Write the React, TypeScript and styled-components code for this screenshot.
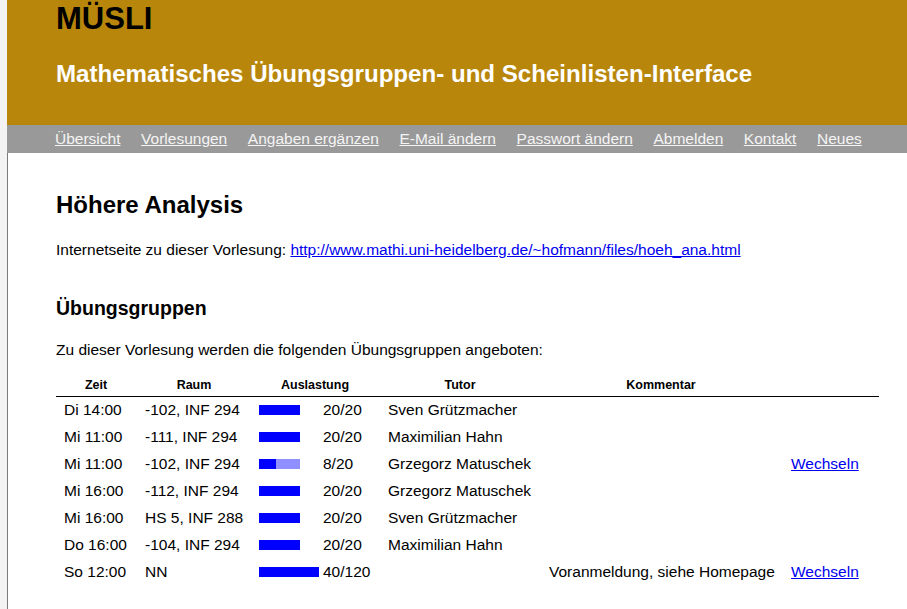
import React from "react";
import styled, { createGlobalStyle } from "styled-components";

const GlobalStyle = createGlobalStyle`
  html, body { margin: 0; padding: 0; }
  body {
    background: #f3f3f3;
    font-family: "Liberation Sans", Arial, sans-serif;
    color: #000;
  }
`;

const Page = styled.div`
  margin-left: 7px;
  min-height: 100vh;
  background: #fff;
  display: flex;
  flex-direction: column;
`;

const Header = styled.header`
  background: #b8860b;
  padding: 3px 0 39px 49px;
`;

const SiteTitle = styled.div`
  font-size: 31px;
  line-height: 32px;
  font-weight: bold;
  color: #000;
`;

const SiteSubtitle = styled.div`
  margin-top: 27px;
  font-size: 24.1px;
  line-height: 24px;
  font-weight: bold;
  color: #fff;
`;

const Nav = styled.nav`
  background: #999999;
  height: 28px;
  display: flex;
  align-items: center;
  gap: 20.6px;
  padding-left: 48px;
`;

const NavLink = styled.a`
  color: #f4f4f4;
  font-size: 15.5px;
  text-decoration: underline;
  white-space: nowrap;
`;

const Main = styled.main`
  flex: 1;
  border-left: 1px solid #7b7b7b;
  padding: 40px 27px 20px 48px;
`;

const Title = styled.h1`
  margin: 0 0 24px;
  font-size: 24px;
  line-height: 24px;
  font-weight: bold;
`;

const Para = styled.p<{ $after?: number }>`
  margin: 0 0 ${(p) => p.$after ?? 0}px;
  font-size: 15.5px;
  line-height: 18px;
`;

const Link = styled.a`
  color: #0000ee;
  text-decoration: underline;
`;

const SectionTitle = styled.h2`
  margin: 39px 0 23px;
  font-size: 19.5px;
  line-height: 20px;
  font-weight: bold;
`;

const Table = styled.table`
  width: 823px;
  border-collapse: collapse;
  table-layout: fixed;
`;

const Th = styled.th`
  font-size: 12.5px;
  line-height: 15px;
  font-weight: bold;
  text-align: center;
  padding: 3px 7px;
  border-bottom: 1px solid #000;
  white-space: nowrap;
`;

const Td = styled.td<{ $align?: "left" | "center" | "right"; $padLeft?: number }>`
  font-size: 15.5px;
  line-height: 18px;
  padding: 4px 7px 5px ${(p) => p.$padLeft ?? 7}px;
  text-align: ${(p) => p.$align ?? "left"};
  white-space: nowrap;
  overflow: visible;
`;

const Track = styled.span`
  display: inline-block;
  width: 60px;
  height: 10px;
  margin-right: 4px;
  overflow: hidden;
  vertical-align: baseline;
`;

const Bar = styled.span`
  display: flex;
  height: 10px;
  background: #8f8fff;
`;

const Fill = styled.span`
  display: block;
  height: 10px;
  background: #0000ff;
`;

type Row = {
  zeit: string;
  raum: string;
  label: string;
  fill: number;
  total: number;
  tutor: string;
  komm?: string;
  wechseln?: boolean;
};

const rows: Row[] = [
  { zeit: "Di 14:00", raum: "-102, INF 294", label: "20/20", fill: 41, total: 41, tutor: "Sven Grützmacher" },
  { zeit: "Mi 11:00", raum: "-111, INF 294", label: "20/20", fill: 41, total: 41, tutor: "Maximilian Hahn" },
  { zeit: "Mi 11:00", raum: "-102, INF 294", label: "8/20", fill: 17, total: 41, tutor: "Grzegorz Matuschek", wechseln: true },
  { zeit: "Mi 16:00", raum: "-112, INF 294", label: "20/20", fill: 41, total: 41, tutor: "Grzegorz Matuschek" },
  { zeit: "Mi 16:00", raum: "HS 5, INF 288", label: "20/20", fill: 41, total: 41, tutor: "Sven Grützmacher" },
  { zeit: "Do 16:00", raum: "-104, INF 294", label: "20/20", fill: 41, total: 41, tutor: "Maximilian Hahn" },
  { zeit: "So 12:00", raum: "NN", label: "40/120", fill: 60, total: 60, tutor: "", komm: "Voranmeldung, siehe Homepage", wechseln: true },
];

const navItems = [
  "Übersicht",
  "Vorlesungen",
  "Angaben ergänzen",
  "E-Mail ändern",
  "Passwort ändern",
  "Abmelden",
  "Kontakt",
  "Neues",
];

export default function App() {
  return (
    <>
      <GlobalStyle />
      <Page>
        <Header>
          <SiteTitle>MÜSLI</SiteTitle>
          <SiteSubtitle>Mathematisches Übungsgruppen- und Scheinlisten-Interface</SiteSubtitle>
        </Header>
        <Nav>
          {navItems.map((n) => (
            <NavLink key={n} href="#">
              {n}
            </NavLink>
          ))}
        </Nav>
        <Main>
          <Title>Höhere Analysis</Title>
          <Para>
            Internetseite zu dieser Vorlesung:{" "}
            <Link href="#">http://www.mathi.uni-heidelberg.de/~hofmann/files/hoeh_ana.html</Link>
          </Para>
          <SectionTitle>Übungsgruppen</SectionTitle>
          <Para $after={16}>Zu dieser Vorlesung werden die folgenden Übungsgruppen angeboten:</Para>
          <Table>
            <colgroup>
              <col style={{ width: 80 }} />
              <col style={{ width: 116 }} />
              <col style={{ width: 126 }} />
              <col style={{ width: 164 }} />
              <col style={{ width: 238 }} />
              <col style={{ width: 99 }} />
            </colgroup>
            <thead>
              <tr>
                <Th>Zeit</Th>
                <Th>Raum</Th>
                <Th>Auslastung</Th>
                <Th>Tutor</Th>
                <Th>Kommentar</Th>
                <Th></Th>
              </tr>
            </thead>
            <tbody>
              {rows.map((r, i) => (
                <tr key={i}>
                  <Td $padLeft={8}>{r.zeit}</Td>
                  <Td $padLeft={9}>{r.raum}</Td>
                  <Td>
                    <Track>
                      <Bar style={{ width: r.total }}>
                        <Fill style={{ width: r.fill }} />
                      </Bar>
                    </Track>
                    {r.label}
                  </Td>
                  <Td $padLeft={10}>{r.tutor}</Td>
                  <Td $align="center">{r.komm ?? ""}</Td>
                  <Td $padLeft={11}>{r.wechseln ? <Link href="#">Wechseln</Link> : null}</Td>
                </tr>
              ))}
            </tbody>
          </Table>
        </Main>
      </Page>
    </>
  );
}
